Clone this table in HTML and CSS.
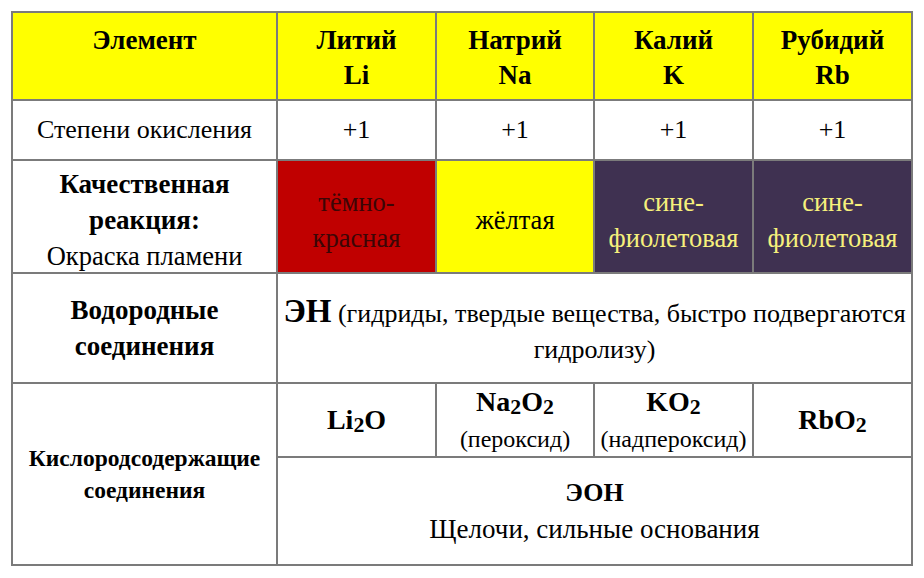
FILE: index.html
```html
<!DOCTYPE html>
<html lang="ru">
<head>
<meta charset="utf-8">
<link rel="stylesheet" href="styles.css">
</head>
<body>
<div class="grid">
  <div class="cell head">Элемент</div>
  <div class="cell head">Литий<br>Li</div>
  <div class="cell head">Натрий<br>Na</div>
  <div class="cell head">Калий<br>K</div>
  <div class="cell head">Рубидий<br>Rb</div>

  <div class="cell">Степени окисления</div>
  <div class="cell">+1</div>
  <div class="cell">+1</div>
  <div class="cell">+1</div>
  <div class="cell">+1</div>

  <div class="cell flame"><div><b class="bb">Качественная<br>реакция:</b><br>Окраска пламени</div></div>
  <div class="cell flame red"><div>тёмно-<br>красная</div></div>
  <div class="cell flame yellow">жёлтая</div>
  <div class="cell flame violet"><div>сине-<br>фиолетовая</div></div>
  <div class="cell flame violet"><div>сине-<br>фиолетовая</div></div>

  <div class="cell"><b class="bb">Водородные<br>соединения</b></div>
  <div class="cell span4 hyd"><div class="hyd-text"><b class="big">ЭН</b> (гидриды, твердые вещества, быстро подвергаются<br>гидролизу)</div></div>

  <div class="cell oxy"><b>Кислородсодержащие<br>соединения</b></div>
  <div class="cell"><b class="f">Li<sub>2</sub>O</b></div>
  <div class="cell"><div><b class="f">Na<sub>2</sub>O<sub>2</sub></b><br><span class="note">(пероксид)</span></div></div>
  <div class="cell"><div><b class="f">KO<sub>2</sub></b><br><span class="note">(надпероксид)</span></div></div>
  <div class="cell"><b class="f">RbO<sub>2</sub></b></div>

  <div class="cell span4 base"><div><b>ЭОН</b><br><span class="alk">Щелочи, сильные основания</span></div></div>
</div>
</body>
</html>
```

FILE: styles.css
```css
html, body {
  margin: 0;
  padding: 0;
  background: #ffffff;
}
body {
  padding: 11px 0 0 11px;
  font-family: "Liberation Serif", "Times New Roman", serif;
  color: #000;
}
.grid {
  display: grid;
  grid-template-columns: 263px 157px 156px 157px 157px;
  grid-template-rows: 86px 58px 111px 108px 72px 106px;
  gap: 2px;
  padding: 2px;
  width: 898px;
  background: #7b7b7b;
  font-family: "Liberation Serif", "Times New Roman", serif;
  font-size: 26px;
  line-height: 36px;
}
.cell {
  background: #ffffff;
  display: flex;
  align-items: center;
  justify-content: center;
  text-align: center;
}
.head {
  background: #ffff00;
  font-weight: bold;
  font-size: 27px;
  align-items: flex-start;
  padding-top: 10px;
  line-height: 35px;
}
.flame { padding-top: 7px; font-size: 26.5px; }
.bb { font-size: 27px; }
.red { background: #c00000; color: #3b0606; }
.yellow { background: #ffff00; }
.violet { background: #3f3151; color: #f6f07c; }
.span4 { grid-column: 2 / 6; }
.hyd { padding: 4px 0 0; font-size: 26px; }
.hyd-text { white-space: nowrap; }
.big { font-size: 33px; }
.oxy {
  grid-row: 5 / 7;
  grid-column: 1;
  font-size: 23.5px;
  line-height: 32px;
}
.base { grid-row: 6; }
.f { font-size: 28px; }
sub {
  font-size: 0.78em;
  vertical-align: -0.12em;
  line-height: 0;
}
.note { font-size: 24px; }
.alk { font-size: 27px; }
```
